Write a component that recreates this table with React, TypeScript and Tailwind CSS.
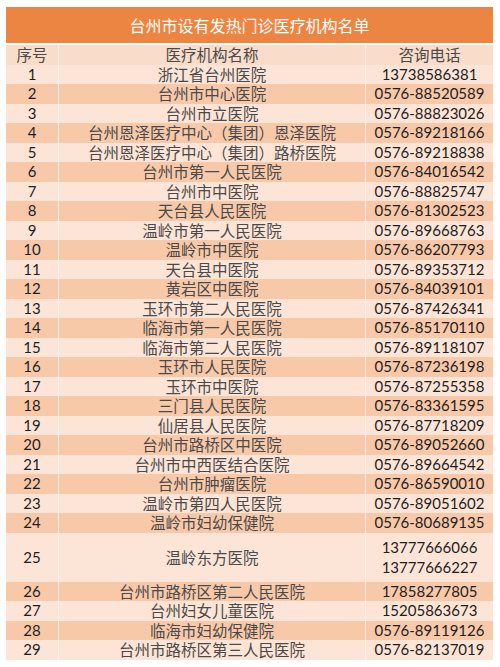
const rows: [string, string, string[]][] = [
  ["1", "浙江省台州医院", ["13738586381"]],
  ["2", "台州市中心医院", ["0576-88520589"]],
  ["3", "台州市立医院", ["0576-88823026"]],
  ["4", "台州恩泽医疗中心（集团）恩泽医院", ["0576-89218166"]],
  ["5", "台州恩泽医疗中心（集团）路桥医院", ["0576-89218838"]],
  ["6", "台州市第一人民医院", ["0576-84016542"]],
  ["7", "台州市中医院", ["0576-88825747"]],
  ["8", "天台县人民医院", ["0576-81302523"]],
  ["9", "温岭市第一人民医院", ["0576-89668763"]],
  ["10", "温岭市中医院", ["0576-86207793"]],
  ["11", "天台县中医院", ["0576-89353712"]],
  ["12", "黄岩区中医院", ["0576-84039101"]],
  ["13", "玉环市第二人民医院", ["0576-87426341"]],
  ["14", "临海市第一人民医院", ["0576-85170110"]],
  ["15", "临海市第二人民医院", ["0576-89118107"]],
  ["16", "玉环市人民医院", ["0576-87236198"]],
  ["17", "玉环市中医院", ["0576-87255358"]],
  ["18", "三门县人民医院", ["0576-83361595"]],
  ["19", "仙居县人民医院", ["0576-87718209"]],
  ["20", "台州市路桥区中医院", ["0576-89052660"]],
  ["21", "台州市中西医结合医院", ["0576-89664542"]],
  ["22", "台州市肿瘤医院", ["0576-86590010"]],
  ["23", "温岭市第四人民医院", ["0576-89051602"]],
  ["24", "温岭市妇幼保健院", ["0576-80689135"]],
  ["25", "温岭东方医院", ["13777666066", "13777666227"]],
  ["26", "台州市路桥区第二人民医院", ["17858277805"]],
  ["27", "台州妇女儿童医院", ["15205863673"]],
  ["28", "临海市妇幼保健院", ["0576-89119126"]],
  ["29", "台州市路桥区第三人民医院", ["0576-82137019"]],
];

const cjk = "font-['Noto_Sans_CJK_SC',sans-serif]";
const num = "font-['Lato','Noto_Sans_CJK_SC',sans-serif]";

export default function App() {
  return (
    <div className="w-[500px] h-[667px] bg-white pt-[7px] pl-[6px] overflow-hidden">
      <div className="w-[487px]">
        <div
          className={`h-[36px] bg-[#ec8542] flex items-center justify-center text-white text-[16px] leading-[20px] ${cjk}`}
        >
          台州市设有发热门诊医疗机构名单
        </div>

        <div className="h-[2px] bg-white" />

        <div
          className={`grid grid-cols-[53px_307px_127px] h-[19.5px] bg-[#f9dcc9] text-[#4a4a4a] text-[15.5px] leading-[19px] ${cjk}`}
        >
          <div className="flex items-center justify-center border-r border-[#fdf0e8]">序号</div>
          <div className="flex items-center justify-center border-r border-[#fdf0e8]">医疗机构名称</div>
          <div className="flex items-center justify-center">咨询电话</div>
        </div>

        {rows.map(([no, name, phones], i) => (
          <div
            key={no}
            className={`grid grid-cols-[53px_307px_127px] ${
              phones.length > 1 ? "h-[49px]" : "h-[19.5px]"
            } ${i % 2 === 0 ? "bg-[#fce5d7]" : "bg-[#f8c9a9]"}`}
          >
            <div
              className={`flex items-center justify-center border-r border-[#fdf0e8] text-[15px] text-[#1e1e1e] leading-[19px] ${num}`}
            >
              {no}
            </div>
            <div
              className={`flex items-center justify-center border-r border-[#fdf0e8] text-[15.5px] text-[#4a4a4a] leading-[19px] whitespace-nowrap ${cjk}`}
            >
              {name}
            </div>
            <div
              className={`flex flex-col items-center justify-center gap-[1px] text-[15px] text-[#1e1e1e] leading-[19px] ${num}`}
            >
              {phones.map((p) => (
                <span key={p}>{p}</span>
              ))}
            </div>
          </div>
        ))}
      </div>
    </div>
  );
}
